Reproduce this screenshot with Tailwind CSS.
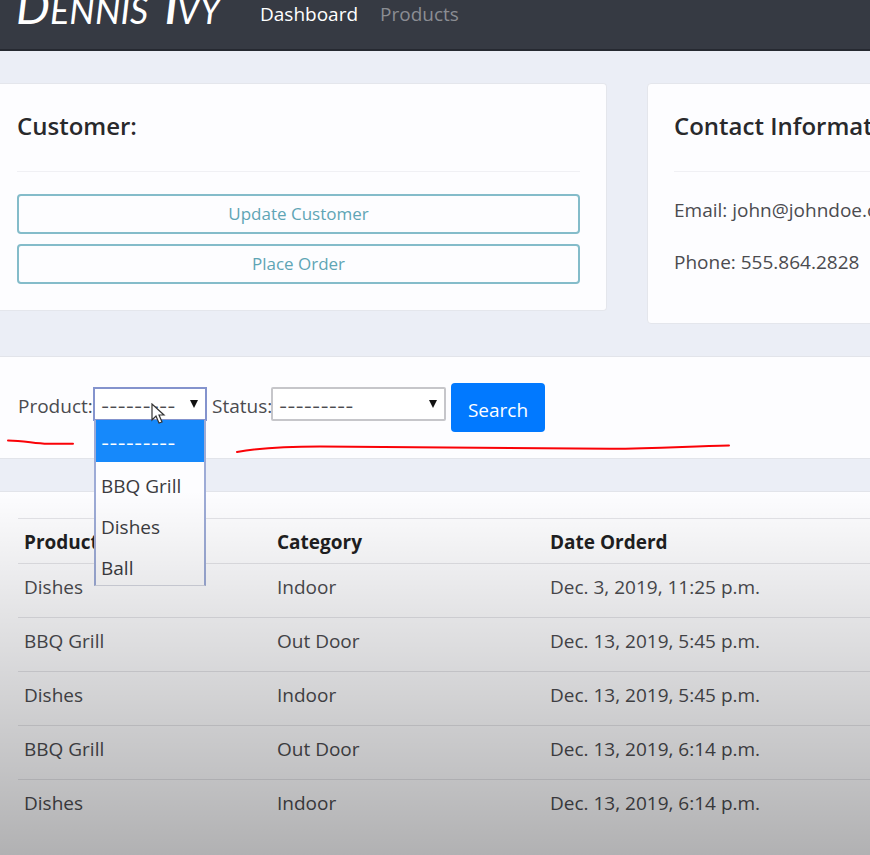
<!DOCTYPE html>
<html lang="en">
<head>
<meta charset="utf-8">
<title>Customer</title>
<script src="https://cdn.jsdelivr.net/npm/@tailwindcss/browser@4"></script>
</head>
<body class="relative min-h-screen flex flex-col overflow-x-hidden bg-[#ebeef6] font-['Open_Sans','Noto_Sans',sans-serif] text-[19px] leading-6 text-[#4b4b4f]">
  <nav class="h-[51px] shrink-0 overflow-hidden bg-[#363a43] border-b-2 border-[#262931] flex items-end pb-[23px] pl-4">
    <a href="#" aria-label="Dennis Ivy" class="w-[244px] mb-2 shrink-0 whitespace-nowrap font-['Lato',sans-serif] italic text-4xl leading-4 text-white"><span class="text-5xl leading-4">D</span>ENNIS&nbsp; <span class="text-[42px] leading-4 font-bold">I</span>VY</a>
    <a href="#" class="text-white">Dashboard</a>
    <a href="#" class="ml-[22px] text-[#8b8d93]">Products</a>
  </nav>

  <main class="grow flex flex-col gap-8 pt-8">
    <div class="flex items-start gap-10 overflow-hidden">
      <section class="w-[calc(70%-2px)] shrink-0 bg-[#fdfdff] border border-l-0 border-[#e4e6ec] rounded-r pl-[17px] pr-[26px] pt-[26px] pb-[26px]">
        <h5 class="text-2xl leading-8 font-semibold text-[#29292c]">Customer:</h5>
        <hr class="mt-[29px] mb-[22px] border-[#f0f0f4]">
        <div class="flex flex-col gap-[10px]">
          <a href="#" class="h-10 flex items-center justify-center rounded border-2 border-[#84bcca] text-[17px] text-[#5fa5b5]">Update Customer</a>
          <a href="#" class="h-10 flex items-center justify-center rounded border-2 border-[#84bcca] text-[17px] text-[#5fa5b5]">Place Order</a>
        </div>
      </section>
      <section class="w-[calc(70%-2px)] shrink-0 bg-[#fdfdff] border border-[#e4e6ec] rounded px-[26px] pt-[26px] pb-[49px]">
        <h5 class="text-2xl leading-8 font-semibold text-[#29292c]">Contact Information</h5>
        <hr class="mt-[29px] mb-[26px] border-[#f0f0f4]">
        <p>Email: john@johndoe.com</p>
        <p class="mt-7">Phone: 555.864.2828</p>
      </section>
    </div>

    <form class="h-[103px] shrink-0 bg-[#fdfdff] border-y border-[#e2e4ea] pl-[18px] pt-[26px] flex items-start">
      <label for="product" class="w-[75px] pt-[11px] whitespace-nowrap">Product:</label>
      <div class="relative mt-1 w-[114px]">
        <select id="product" class="appearance-none block w-full h-[34px] pl-[6px] pt-[6px] border-2 border-[#8493cd] bg-white text-lg leading-6 font-['Inter',sans-serif] text-[#4b4b4f]">
          <option>---------</option><option>BBQ Grill</option><option>Dishes</option><option>Ball</option>
        </select>
        <svg class="absolute right-2 top-3 pointer-events-none" width="10" height="10" viewBox="0 0 10 10"><path d="M1 1h8L5 9z" fill="#111"/></svg>
        <ul role="listbox" aria-label="Product" class="absolute z-10 left-px top-[33px] w-28 border-x-2 border-b border-x-[#9dabd6] border-b-[#d5d7e0] bg-[#fdfdff] text-[#3b3b40]">
          <li role="option" aria-selected="true" class="h-[42px] flex items-center pt-[6px] pl-[5px] bg-[#1689fb] text-lg font-['Inter',sans-serif] text-white">---------</li>
          <li role="option" class="h-[41px] flex items-center pt-[6px] pl-[5px]">BBQ Grill</li>
          <li role="option" class="h-[41px] flex items-center pt-[6px] pl-[5px]">Dishes</li>
          <li role="option" class="h-[41px] flex items-center pt-[6px] pl-[5px]">Ball</li>
        </ul>
        <svg class="absolute z-20 left-[57px] top-4 pointer-events-none" width="16" height="22" viewBox="0 0 16 22"><path d="M2 1v16l4-4 3 7 3-1-3-7h5z" fill="#fff" stroke="#333" stroke-width="1.2"/></svg>
      </div>
      <label for="status" class="w-[64px] pl-[5px] pt-[11px] whitespace-nowrap">Status:</label>
      <div class="relative mt-1 w-[175px]">
        <select id="status" class="appearance-none block w-full h-[34px] pl-[6px] pt-[6px] border-2 border-[#c6c6ca] rounded-xs bg-white text-lg leading-6 font-['Inter',sans-serif] text-[#4b4b4f]">
          <option>---------</option>
        </select>
        <svg class="absolute right-2 top-3 pointer-events-none" width="10" height="10" viewBox="0 0 10 10"><path d="M1 1h8L5 9z" fill="#111"/></svg>
      </div>
      <button type="submit" class="ml-[5px] h-[49px] w-[94px] rounded bg-[#0179ff] text-white pt-1">Search</button>
    </form>

    <section class="grow bg-[#fdfdff] border-t border-[#e2e4ea] pl-[18px] pt-[26px]">
      <table class="w-full table-fixed text-left">
        <colgroup><col class="w-[253px]"><col class="w-[273px]"><col></colgroup>
        <thead class="text-[#1f1f22] font-bold">
          <tr class="border-y border-[#e4e4e8]"><th class="px-[6px] pt-[11px] pb-[9px]">Product</th><th class="px-[6px] pt-[11px] pb-[9px]">Category</th><th class="px-[6px] pt-[11px] pb-[9px]">Date Orderd</th></tr>
        </thead>
        <tbody>
          <tr><td class="px-[6px] pt-[11px] pb-[18px]">Dishes</td><td class="px-[6px] pt-[11px] pb-[18px]">Indoor</td><td class="px-[6px] pt-[11px] pb-[18px]">Dec. 3, 2019, 11:25 p.m.</td></tr>
          <tr class="border-t border-[#e4e4e8]"><td class="px-[6px] pt-[11px] pb-[18px]">BBQ Grill</td><td class="px-[6px] pt-[11px] pb-[18px]">Out Door</td><td class="px-[6px] pt-[11px] pb-[18px]">Dec. 13, 2019, 5:45 p.m.</td></tr>
          <tr class="border-t border-[#e4e4e8]"><td class="px-[6px] pt-[11px] pb-[18px]">Dishes</td><td class="px-[6px] pt-[11px] pb-[18px]">Indoor</td><td class="px-[6px] pt-[11px] pb-[18px]">Dec. 13, 2019, 5:45 p.m.</td></tr>
          <tr class="border-t border-[#e4e4e8]"><td class="px-[6px] pt-[11px] pb-[18px]">BBQ Grill</td><td class="px-[6px] pt-[11px] pb-[18px]">Out Door</td><td class="px-[6px] pt-[11px] pb-[18px]">Dec. 13, 2019, 6:14 p.m.</td></tr>
          <tr class="border-t border-[#e4e4e8]"><td class="px-[6px] pt-[11px] pb-[18px]">Dishes</td><td class="px-[6px] pt-[11px] pb-[18px]">Indoor</td><td class="px-[6px] pt-[11px] pb-[18px]">Dec. 13, 2019, 6:14 p.m.</td></tr>
        </tbody>
      </table>
    </section>
  </main>

  <div class="absolute z-30 inset-x-0 top-[491px] bottom-0 bg-linear-to-b from-black/0 to-black/30 pointer-events-none"></div>
  <svg class="absolute z-30 left-0 top-[430px] pointer-events-none" width="740" height="30" viewBox="0 0 740 30" fill="none" stroke="#fa0207" stroke-width="2" stroke-linecap="round"><path d="M8 10.500C24 10.500 34 13.500 48 13.800H73"/><path d="M237 22C265 17 290 16.500 320 16.500C430 16.500 520 18.500 610 18.700C660 18.700 690 16 729 15.500"/></svg>
</body>
</html>
